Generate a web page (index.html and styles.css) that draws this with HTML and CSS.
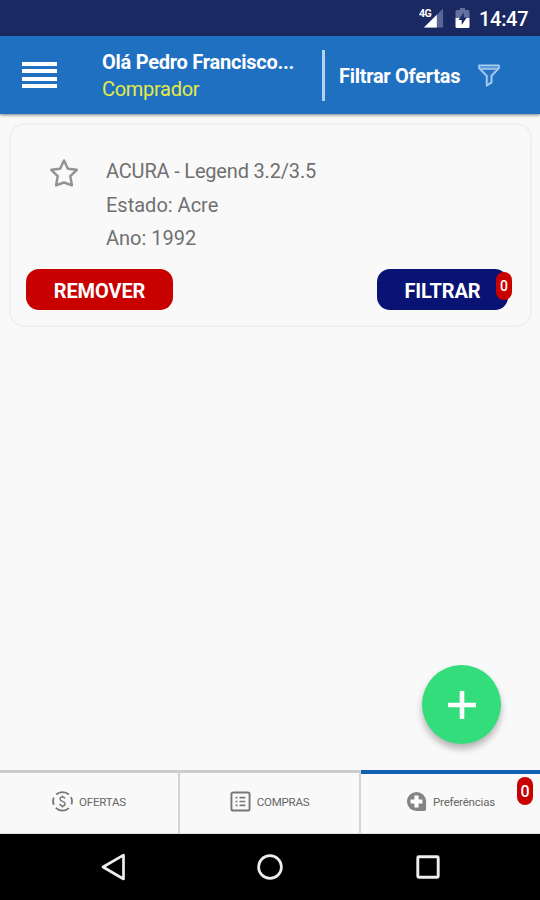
FILE: index.html
```html
<!DOCTYPE html>
<html lang="pt">
<head>
<meta charset="utf-8">
<title>Preferências</title>
<link rel="stylesheet" href="styles.css">
</head>
<body>
<div class="screen">
  <div class="status">
    <svg class="signal" width="21" height="21" viewBox="4 0 22 21"><path d="M25 0V20H5Z" fill="#596696"/><path d="M18.500 6.500V20H5Z" fill="#fff"/></svg>
    <span class="network">4G</span>
    <svg class="battery" width="15" height="21" viewBox="0 0 15 21"><path d="M5 0h5v2h3q1.500 0 1.500 1.500V10H.5V3.500Q.5 2 2 2h3Z" fill="#65719f"/><path d="M.5 10h14v8.500q0 1.500-1.500 1.500H2Q.5 20 .5 18.500Z" fill="#fff"/><path d="M8.800 4.500 3.500 12h3.200v5l5-7.500H8.800Z" fill="#1b2963"/></svg>
    <span class="clock">14:47</span>
  </div>
  <header class="header">
    <div class="menu"><i></i><i></i><i></i><i></i></div>
    <div class="user"><div class="name">Olá Pedro Francisco...</div><div class="role">Comprador</div></div>
    <div class="rule"></div>
    <div class="filter-label">Filtrar Ofertas</div>
    <svg class="funnel" width="22" height="23" viewBox="0 0 22 23"><path d="M1 1.300h20v3L13.700 12v6.500L8.600 21.700V12L1 4.300Z" fill="#5f9bd9" stroke="#a9cdf1" stroke-width="1.600" stroke-linejoin="round"/><path d="M4.800 5.800h12.400L12 11.300v6.500l-1.800 1.100v-7.600Z" fill="#2472c3"/><path d="M1.500 5h19" stroke="#a9cdf1" stroke-width="1.300"/></svg>
  </header>
  <main class="content">
    <section class="card">
      <div class="details">
        <svg class="star" width="30" height="30" viewBox="0 0 30 30"><path d="m15 2.500 3.900 8.200 8.900 1.100-6.500 6.300 1.600 9.200-7.900-2.800-7.900 2.800 1.600-9.200-6.500-6.300 8.900-1.100Z" fill="none" stroke="#939393" stroke-width="2.500" stroke-linejoin="round"/></svg>
        <div class="lines">
          <div class="model">ACURA - Legend 3.2/3.5</div>
          <div class="state">Estado: Acre</div>
          <div class="year">Ano: 1992</div>
        </div>
      </div>
      <div class="actions">
        <div class="button remove"><span>REMOVER</span></div>
        <div class="button apply"><span>FILTRAR</span><b class="badge">0</b></div>
      </div>
    </section>
    <div class="fab"><svg width="30" height="30" viewBox="0 0 30 30"><path d="M15 1v28M1 15h28" stroke="#fff" stroke-width="4.600"/></svg></div>
  </main>
  <nav class="tabs">
    <div class="tab">
      <svg width="21" height="21" viewBox="0 0 22 22" fill="none" stroke="#777"><path d="M4.300 3.700A10 10 0 0 1 17.700 3.700M19.900 6.400A10 10 0 0 1 20.400 14M17.700 17.900A10 10 0 0 1 4 17.600M1.900 14.500A10 10 0 0 1 1.900 7" stroke-width="1.900"/><path d="M13.600 8Q13 6.200 11 6.200 8.400 6.200 8.400 8.400C8.400 11.500 13.700 10.200 13.700 13.300Q13.700 15.600 11 15.600 8.600 15.600 8.200 13.500M11 4.600v1.700M11 15.600v1.800" stroke-width="1.500"/></svg>
      <span class="offers">OFERTAS</span>
    </div>
    <div class="tab">
      <svg width="21" height="21" viewBox="0 0 22 22" fill="none" stroke="#777"><rect x="1.500" y="1.500" width="19" height="19" rx="2" stroke-width="2"/><path d="M5.800 7h2M5.800 11h2M5.800 15h2M10 7h6M10 11h6M10 15h6" stroke-width="1.700"/></svg>
      <span class="purchases">COMPRAS</span>
    </div>
    <div class="tab active">
      <svg width="21" height="21" viewBox="0 0 22 22"><path d="M11 1A10 10 0 0 1 21 11V19q0 2-2 2H11A10 10 0 0 1 11 1Z" fill="#848484"/><path d="M8.800 4.800h4.400v4h4v4.400h-4v4H8.800v-4h-4V8.800h4Z" fill="#fff"/></svg>
      <span class="preferences">Preferências</span>
      <b class="badge">0</b>
    </div>
  </nav>
  <footer class="system">
    <svg width="26" height="30" viewBox="0 0 26 30"><path d="M23.500 3.200V27L3 15Z" fill="none" stroke="#eee" stroke-width="2.700" stroke-linejoin="round"/></svg>
    <svg width="28" height="28" viewBox="0 0 28 28"><circle cx="14" cy="14" r="11.400" fill="none" stroke="#eee" stroke-width="2.700"/></svg>
    <svg width="26" height="26" viewBox="0 0 26 26"><rect x="2.800" y="2.800" width="20.400" height="20.400" rx="1" fill="none" stroke="#eee" stroke-width="2.900"/></svg>
  </footer>
</div>
</body>
</html>
```
FILE: styles.css
```css
* { box-sizing: border-box; }
body { margin: 0; font-family: Roboto, sans-serif; }
svg { display: block; flex: none; }
.screen { width: 540px; height: 900px; display: flex; flex-direction: column; background: #f9f9f9; overflow: hidden; }
.status { position: relative; height: 36px; flex: none; background: #1b2963; display: flex; justify-content: flex-end; align-items: center; padding: 1px 11px 0 0; color: #fff; }
.signal { margin-right: 11px; }
.network { position: absolute; left: 419px; top: 8px; font-size: 10.500px; line-height: 12px; font-weight: 700; letter-spacing: -.6px; }
.battery { margin-right: 9px; }
.clock { width: 50px; font-size: 20px; font-weight: 500; line-height: 24px; letter-spacing: -.3px; white-space: nowrap; }
.header { position: relative; z-index: 1; height: 78px; flex: none; background: #2070c1; display: flex; align-items: center; padding-left: 22px; color: #fff; box-shadow: 0 1px 3px rgba(0, 0, 0, .5); }
.menu { width: 35px; height: 27px; display: flex; flex-direction: column; justify-content: space-between; margin-right: 45px; }
.menu i { height: 4.300px; background: #fff; }
.user { width: 193px; margin-right: 27px; font-size: 20px; line-height: 27px; white-space: nowrap; padding-top: 2px; }
.name { font-weight: 700; letter-spacing: -.25px; }
.role { color: #e5eb45; letter-spacing: -.3px; }
.rule { width: 3px; height: 51px; background: #b3d1f0; margin-right: 14px; }
.filter-label { width: 139px; font-size: 20px; line-height: 24px; font-weight: 700; letter-spacing: -.28px; white-space: nowrap; padding-top: 2px; }
.funnel { margin-top: 1px; }
.content { position: relative; flex: 1; padding: 9px 8px 0 9px; }
.card { height: 204px; border: 2px solid #f0f0f0; border-radius: 15px; padding: 30px 22px 0 15px; }
.details { display: flex; height: 114px; padding-left: 23px; }
.star { margin-top: 3px; }
.lines { margin-left: 27px; font-size: 20px; line-height: 33.500px; color: #707070; white-space: nowrap; }
.model { letter-spacing: -.18px; }
.actions { display: flex; justify-content: space-between; }
.button { position: relative; height: 41px; border-radius: 13px; display: flex; justify-content: center; align-items: center; color: #fff; font-size: 20px; font-weight: 700; letter-spacing: -.1px; padding-top: 2px; }
.remove { width: 147px; background: #c80000; }
.apply { width: 131px; background: #091374; }
.badge { position: absolute; width: 16px; height: 28px; border-radius: 8px; background: #c80000; color: #fff; display: flex; align-items: center; justify-content: center; font-size: 14px; font-weight: 500; }
.apply .badge { right: -4px; top: 3px; }
.fab { position: absolute; right: 39px; bottom: 26px; width: 79px; height: 79px; border-radius: 50%; background: #33dd7c; display: flex; align-items: center; justify-content: center; box-shadow: 0 5px 7px rgba(0, 0, 0, .28); }
.tabs { height: 64px; flex: none; display: grid; grid-template-columns: 180px 181px 179px; color: #666; font-size: 11.500px; border-bottom: 1px solid #ddd; }
.tab { position: relative; border-top: 3px solid #ccc; border-right: 2px solid #d4d4d4; display: flex; align-items: center; justify-content: center; gap: 6px; padding-bottom: 3px; letter-spacing: -.2px; }
.active { border-top: 4px solid #1260b3; border-right: 0; padding-bottom: 4px; }
.active .badge { right: 7px; top: 3px; font-size: 16px; }
.system { height: 66px; flex: none; display: flex; align-items: center; padding-left: 100px; background: #000; }
.system svg:nth-child(2) { margin-left: 130px; }
.system svg:nth-child(3) { margin-left: 131px; }
```
